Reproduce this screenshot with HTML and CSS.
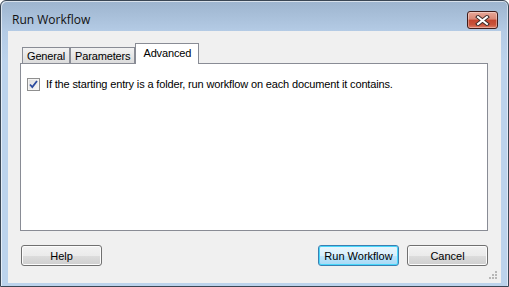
FILE: index.html
```html
<!DOCTYPE html>
<html lang="en">
<head>
    <meta charset="UTF-8">
    <title>Run Workflow</title>
    <link rel="stylesheet" href="styles.css">
</head>
<body>
    <div class="window">
        <div class="titlebar">
            <span class="title">Run Workflow</span>
            <button class="close-btn" title="Close">
                <svg width="15" height="11" viewBox="0 0 15 11">
                    <path d="M3 2 L12 9 M12 2 L3 9" stroke="#3b2a28" stroke-width="4" stroke-linecap="square"/>
                    <path d="M3 2 L12 9 M12 2 L3 9" stroke="#ffffff" stroke-width="2" stroke-linecap="square"/>
                </svg>
            </button>
        </div>

        <div class="client">
            <div class="tabs">
                <div class="tab">General</div>
                <div class="tab">Parameters</div>
                <div class="tab active">Advanced</div>
            </div>

            <div class="panel">
                <label class="option">
                    <span class="checkbox">
                        <svg width="11" height="11" viewBox="0 0 11 11">
                            <path d="M2 5.5 L4.3 8 L9 2" fill="none" stroke="#2a4a9e" stroke-width="1.8"/>
                        </svg>
                    </span>
                    If the starting entry is a folder, run workflow on each document it contains.
                </label>
            </div>

            <div class="actions">
                <button class="btn">Help</button>
                <span class="spacer"></span>
                <button class="btn default">Run Workflow</button>
                <button class="btn">Cancel</button>
            </div>

            <svg class="grip" width="10" height="10" viewBox="0 0 10 10">
                <rect x="7" y="1" width="2" height="2" fill="#b7b7b7"/>
                <rect x="4" y="4" width="2" height="2" fill="#b7b7b7"/>
                <rect x="7" y="4" width="2" height="2" fill="#b7b7b7"/>
                <rect x="1" y="7" width="2" height="2" fill="#b7b7b7"/>
                <rect x="4" y="7" width="2" height="2" fill="#b7b7b7"/>
                <rect x="7" y="7" width="2" height="2" fill="#b7b7b7"/>
            </svg>
        </div>
    </div>
</body>
</html>
```

FILE: styles.css
```css
* {
    margin: 0;
    padding: 0;
    box-sizing: border-box;
}

body {
    background: #ffffff;
    font-family: 'Liberation Sans', Arial, sans-serif;
    font-size: 11px;
    color: #000;
}

.window {
    width: 509px;
    height: 287px;
    border: 1px solid #3a4654;
    border-radius: 6px 6px 0 0;
    background: linear-gradient(to bottom, #9db4ce 0px, #b4cbe5 30px, #bcd3ec 60px, #bcd3ec 100%);
    padding: 0 7px 3px 7px;
    display: flex;
    flex-direction: column;
    box-shadow: inset 1px 1px 0 rgba(255,255,255,0.6), inset -1px 0 0 rgba(255,255,255,0.5);
}

.titlebar {
    height: 30px;
    display: flex;
    align-items: flex-start;
    justify-content: space-between;
}

.title {
    font-family: 'Open Sans', 'Noto Sans', sans-serif;
    font-size: 12px;
    color: #111;
    padding: 10px 0 0 4px;
}

.close-btn {
    margin: 10px 3px 0 0;
    width: 31px;
    height: 18px;
    border: 1px solid #3f1c1a;
    border-radius: 3px;
    background: linear-gradient(to bottom, #e8a899 0%, #d98775 45%, #c4452f 50%, #c9543c 80%, #e0806a 100%);
    box-shadow: inset 0 0 0 1px rgba(255,255,255,0.35);
    display: flex;
    align-items: center;
    justify-content: center;
}

.client {
    flex: 1;
    background: #f0f0f0;
    padding: 12px 13px 0 12px;
    display: flex;
    flex-direction: column;
    position: relative;
}

.tabs {
    display: flex;
    align-items: flex-end;
    padding-left: 2px;
    margin-bottom: -1px;
    position: relative;
    z-index: 1;
}

.tab {
    height: 16px;
    margin-bottom: 1px;
    padding: 2px 4px 0 4px;
    border: 1px solid #898c95;
    border-bottom: none;
    background: linear-gradient(to bottom, #f2f2f2, #dcdcdc);
    line-height: 13px;
    letter-spacing: -0.15px;
}

.tab.active {
    height: 21px;
    margin-bottom: 0;
    padding: 3px 7px 0 7px;
    background: #ffffff;
}

.panel {
    height: 168px;
    background: #ffffff;
    border: 1px solid #898c95;
    padding: 14px 6px;
}

.option {
    display: flex;
    align-items: center;
    gap: 6px;
    line-height: 13px;
    letter-spacing: -0.15px;
}

.checkbox {
    width: 13px;
    height: 13px;
    border: 1px solid #8f8f8f;
    background: linear-gradient(135deg, #dcdcdc, #f8f8f8);
    display: flex;
    align-items: center;
    justify-content: center;
    box-shadow: inset 0 0 0 1px #f4f4f4;
}

.actions {
    display: flex;
    gap: 8px;
    margin-top: 14px;
    padding-left: 1px;
}

.spacer {
    flex: 1;
}

.btn {
    width: 81px;
    height: 21px;
    border: 1px solid #707070;
    border-radius: 3px;
    background: linear-gradient(to bottom, #f2f2f2 0%, #ebebeb 50%, #dddddd 51%, #cfcfcf 100%);
    box-shadow: inset 0 0 0 1px #fcfcfc;
    font-family: 'Liberation Sans', Arial, sans-serif;
    font-size: 11px;
    color: #000;
}

.btn.default {
    border-color: #3c7fb1;
    box-shadow: inset 0 0 0 1px #48d7fb;
    background: linear-gradient(to bottom, #eaf6fd 0%, #d9f0fc 50%, #bee6fd 51%, #a7d9f5 100%);
}

.grip {
    position: absolute;
    right: 3px;
    bottom: 3px;
}
```
